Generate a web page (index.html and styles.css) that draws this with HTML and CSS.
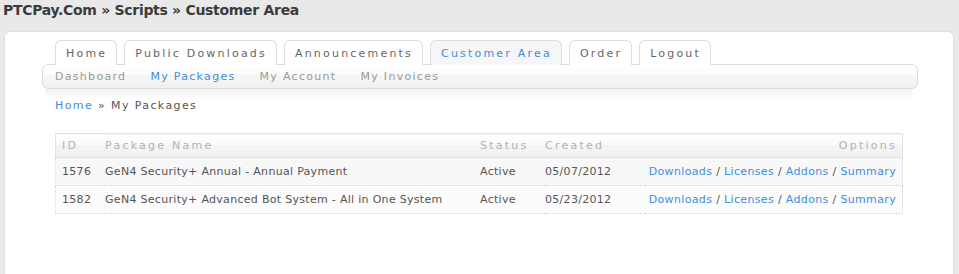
FILE: index.html
```html
<!DOCTYPE html>
<html>
<head>
<meta charset="utf-8">
<title>Customer Area</title>
<link rel="stylesheet" href="styles.css">
</head>
<body>
<div class="title">PTCPay.Com » Scripts » Customer Area</div>
<div class="panel">
  <ul class="tabs">
    <li class="tab">Home</li>
    <li class="tab">Public Downloads</li>
    <li class="tab">Announcements</li>
    <li class="tab active">Customer Area</li>
    <li class="tab">Order</li>
    <li class="tab">Logout</li>
  </ul>
  <div class="subnav">
    <span class="sub">Dashboard</span>
    <span class="sub current">My Packages</span>
    <span class="sub">My Account</span>
    <span class="sub">My Invoices</span>
  </div>
  <div class="shade"></div>
  <div class="crumb"><a class="link">Home</a> » My Packages</div>
  <table class="grid">
    <thead>
      <tr><th class="c-id">ID</th><th class="c-name">Package Name</th><th class="c-status">Status</th><th class="c-created">Created</th><th class="c-opt">Options</th></tr>
    </thead>
    <tbody>
      <tr class="odd"><td>1576</td><td>GeN4 Security+ Annual - Annual Payment</td><td>Active</td><td>05/07/2012</td><td class="c-opt"><a class="link">Downloads</a> / <a class="link">Licenses</a> / <a class="link">Addons</a> / <a class="link">Summary</a></td></tr>
      <tr class="even"><td>1582</td><td>GeN4 Security+ Advanced Bot System - All in One System</td><td>Active</td><td>05/23/2012</td><td class="c-opt"><a class="link">Downloads</a> / <a class="link">Licenses</a> / <a class="link">Addons</a> / <a class="link">Summary</a></td></tr>
    </tbody>
  </table>
</div>
</body>
</html>
```
FILE: styles.css
```css
html, body { margin: 0; padding: 0; }
body {
  background: #e9e9e9;
  font-family: "DejaVu Sans", Verdana, sans-serif;
  font-size: 11px;
  color: #555;
  height: 274px;
  overflow: hidden;
}
.title {
  font-weight: bold;
  font-size: 14px;
  color: #3b3b3b;
  padding: 2px 0 0 3px;
  height: 31px;
  box-sizing: border-box;
  letter-spacing: -0.3px;
}
.panel {
  margin: 0 5px 0 4px;
  background: #fff;
  border: 1px solid #e0e0e0;
  border-bottom: none;
  border-radius: 6px 6px 0 0;
  height: 243px;
  box-sizing: border-box;
  padding-top: 8px;
}
.tabs {
  list-style: none;
  margin: 0 0 -1px 50px;
  padding: 0;
  display: flex;
  gap: 7px;
  position: relative;
  z-index: 1;
}
.tab {
  border: 1px solid #dcdcdc;
  border-bottom: none;
  border-radius: 6px 6px 0 0;
  background: #fff;
  height: 24px;
  line-height: 25px;
  padding: 0 9px 0 10px;
  letter-spacing: 2.2px;
  color: #666;
}
.tab.active { background: #f6f6f6; color: #3d8ee0; }
.subnav {
  margin: 0 35px 0 37px;
  height: 23px;
  border: 1px solid #dcdcdc;
  border-radius: 6px;
  background: linear-gradient(to bottom, #ffffff 0%, #fbfbfb 45%, #eeeeee 48%, #f7f7f7 52%, #f0f0f0 100%);
  display: flex;
  gap: 24px;
  padding-left: 12px;
  line-height: 24px;
  letter-spacing: 1.3px;
  color: #999;
}
.sub.current { color: #3d8ee0; }
.shade {
  margin: 0 41px 0 40px;
  height: 10px;
  background: linear-gradient(to bottom, #f1f1f1, #ffffff);
}
.crumb {
  margin-left: 50px;
  letter-spacing: 1.4px;
  color: #555;
  line-height: 14px;
}
.link { color: #3d8ee0; text-decoration: none; }
.grid {
  margin: 20px 0 0 50px;
  width: 848px;
  border-collapse: collapse;
}
.grid th {
  height: 23px;
  padding: 0;
  font-weight: normal;
  text-align: left;
  color: #b2b2b2;
  letter-spacing: 2.25px;
  border-top: 1px solid #e3e3e3;
  border-bottom: 1px solid #e3e3e3;
  background: linear-gradient(to bottom, #fefefe 0%, #fafafa 45%, #ececec 48%, #f5f5f5 52%, #efefef 100%);
}
.grid th:first-child { border-left: 1px solid #e3e3e3; }
.grid th:last-child { border-right: 1px solid #e3e3e3; }
.grid td {
  height: 27px;
  padding: 0;
  letter-spacing: 0.3px;
  color: #555;
  border-bottom: 1px dotted #d4d4d4;
}
.grid td:first-child { border-left: 1px dotted #d4d4d4; }
.grid td:last-child { border-right: 1px dotted #d4d4d4; }
.grid .odd td { background: #f8f8f8; }
.grid .even td { background: #fcfcfc; }
.grid th.c-id, .grid td:first-child { padding-left: 6px; width: 43px; }
.grid .c-name { width: 375px; }
.grid .c-status { width: 65px; }
.grid .c-created { width: 100px; }
.grid .c-opt { text-align: right; padding-right: 6px; }
.grid td.c-opt { letter-spacing: 0.35px; }
.grid th.c-opt { padding-right: 5px; }
```
